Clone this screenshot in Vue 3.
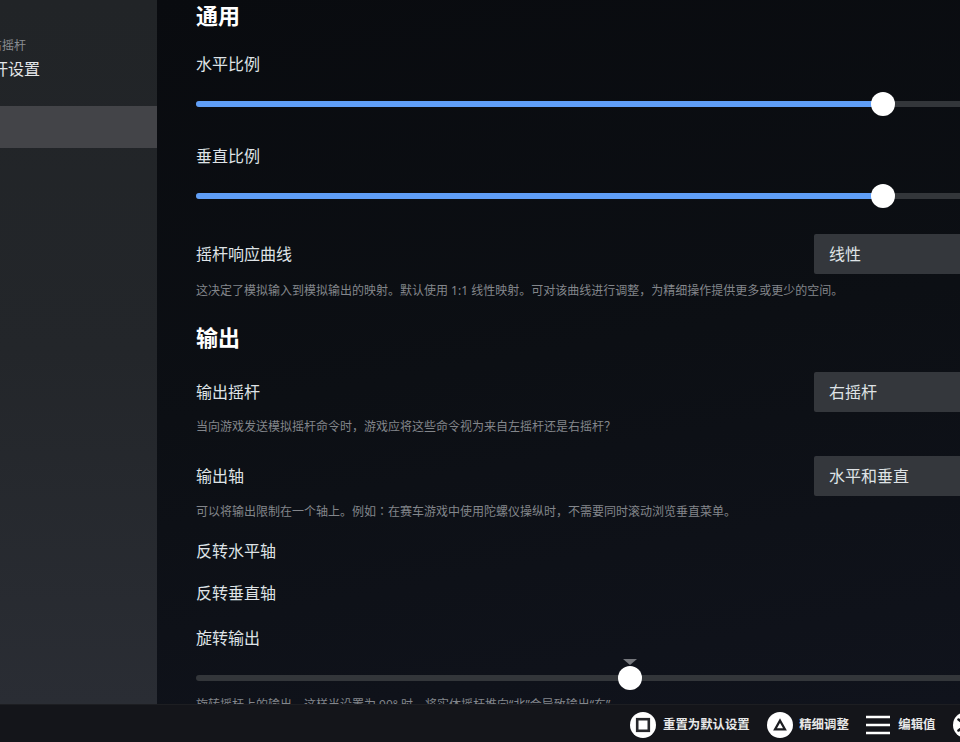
<template>
  <div class="page">
    <div class="top">
      <aside class="side">
        <div class="crumb">右摇杆</div>
        <div class="side-title">摇杆设置</div>
        <div class="side-active"></div>
      </aside>
      <main class="main">
        <h2 class="head first">通用</h2>
        <div class="label l-h">水平比例</div>
        <div class="slider s-h"><div class="fill" style="width: 687px"></div><div class="thumb" style="left: 675px"></div></div>
        <div class="label l-v">垂直比例</div>
        <div class="slider s-v"><div class="fill" style="width: 687px"></div><div class="thumb" style="left: 675px"></div></div>
        <div class="row r-curve"><div class="label">摇杆响应曲线</div><div class="select">线性</div></div>
        <p class="desc">这决定了模拟输入到模拟输出的映射。默认使用 1:1 线性映射。可对该曲线进行调整，为精细操作提供更多或更少的空间。</p>
        <h2 class="head second">输出</h2>
        <div class="row r-stick"><div class="label">输出摇杆</div><div class="select">右摇杆</div></div>
        <p class="desc">当向游戏发送模拟摇杆命令时，游戏应将这些命令视为来自左摇杆还是右摇杆？</p>
        <div class="row r-axis"><div class="label">输出轴</div><div class="select">水平和垂直</div></div>
        <p class="desc">可以将输出限制在一个轴上。例如<span class="colon">：</span>在赛车游戏中使用陀螺仪操纵时，不需要同时滚动浏览垂直菜单。</p>
        <div class="label l-inv1">反转水平轴</div>
        <div class="label l-inv2">反转垂直轴</div>
        <div class="label l-rot">旋转输出</div>
        <div class="slider s-rot"><div class="notch"></div><div class="thumb" style="left: 422px"></div></div>
        <p class="desc d-rot">旋转摇杆上的输出。这样当设置为 90° 时，将实体摇杆推向“北”会导致输出“东”。</p>
      </main>
    </div>
    <footer class="foot">
      <div class="hint">
        <span class="btn"><svg width="26" height="26" viewBox="0 0 26 26"><rect x="7.2" y="7.2" width="11.6" height="11.6" fill="none" stroke="#26272b" stroke-width="2.6"/></svg></span>
        <span class="hint-t">重置为默认设置</span>
      </div>
      <div class="hint h-fine">
        <span class="btn"><svg width="26" height="26" viewBox="0 0 26 26"><path d="M13 8.6 L18 17.4 H8 Z" fill="none" stroke="#1c1d21" stroke-width="2.2"/></svg></span>
        <span class="hint-t">精细调整</span>
      </div>
      <div class="hint h-menu">
        <svg class="menu" width="24" height="20" viewBox="0 0 24 20"><path d="M0 2h24M0 10h24M0 18h24" stroke="#fff" stroke-width="2.4"/></svg>
        <span class="hint-t">编辑值</span>
      </div>
      <div class="hint">
        <span class="btn"><svg width="26" height="26" viewBox="0 0 26 26"><path d="M5.5 7.5L20.5 18.5M20.5 7.5L5.5 18.5" stroke="#14151a" stroke-width="2.6" stroke-linecap="round"/></svg></span>
        <span class="hint-t">取消</span>
      </div>
    </footer>
  </div>
</template>

<script setup>
</script>

<style>
html, body { margin: 0; background: #14151a; }
</style>

<style scoped>
.page {
  width: 960px;
  height: 742px;
  overflow: hidden;
  display: flex;
  flex-direction: column;
  font-family: "Noto Sans", "Noto Sans CJK SC", sans-serif;
  color: #dfe3e6;
}
.top { flex: 1; min-height: 0; display: flex; overflow: hidden; }
.side {
  width: 157px;
  flex: none;
  overflow: hidden;
  background: linear-gradient(180deg, #212427 0%, #23262a 50%, #2a2d34 100%);
  padding-top: 37px;
  box-sizing: border-box;
}
.crumb { margin-left: -10px; font-size: 12px; line-height: 17px; color: #8b8e92; white-space: nowrap; }
.side-title { margin-left: -24px; margin-top: 3px; font-size: 16px; line-height: 24px; color: #e4e6e8; white-space: nowrap; }
.side-active { margin-top: 25px; height: 42px; background: #434448; }
.main {
  flex: none;
  width: 803px;
  padding-left: 39px;
  box-sizing: border-box;
  overflow: hidden;
  background: linear-gradient(170deg, #090b0f 0%, #0c0f14 50%, #10131c 100%);
}
.main > * { width: 900px; }
.head { margin: 0; font-size: 22px; line-height: 28px; font-weight: 700; color: #fff; }
.first { margin-top: 1px; }
.second { margin-top: 24px; }
.label { font-size: 16px; line-height: 24px; color: #dfe3e6; }
.l-h { margin-top: 23px; }
.slider { position: relative; height: 6px; background: #33363a; border-radius: 3px; }
.s-h { margin-top: 25px; }
.l-v { margin-top: 37px; }
.s-v { margin-top: 25px; }
.fill { height: 6px; background: #5f9ef7; border-radius: 3px; }
.thumb { position: absolute; top: -9px; width: 24px; height: 24px; border-radius: 50%; background: #fff; }
.notch {
  position: absolute; left: 427px; top: -16px; width: 0; height: 0;
  border-left: 7px solid transparent; border-right: 7px solid transparent; border-top: 6px solid #75777c;
}
.row { display: flex; align-items: center; justify-content: space-between; }
.select {
  width: 282px; height: 40px; box-sizing: border-box; padding-left: 15px;
  background: #34373c; border-radius: 2px; font-size: 16px; line-height: 40px; color: #dfe3e6;
}
.r-curve { margin-top: 35px; }
.desc { margin: 0; font-size: 12px; line-height: 16px; color: #83868b; white-space: nowrap; }
.colon { font-family: "Noto Sans CJK JP", sans-serif; }
.r-curve + .desc { margin-top: 9px; }
.r-stick { margin-top: 21px; }
.r-stick + .desc { margin-top: 7px; }
.r-axis { margin-top: 21px; }
.r-axis + .desc { margin-top: 7px; }
.l-inv1 { margin-top: 19px; }
.l-inv2 { margin-top: 18px; }
.l-rot { margin-top: 21px; }
.s-rot { margin-top: 25px; }
.d-rot { margin-top: 16px; }
.foot {
  flex: none;
  height: 38px;
  box-sizing: border-box;
  border-top: 1px solid #1d1e22;
  padding-top: 3px;
  background: #14151a;
  display: flex;
  align-items: center;
  padding-left: 630px;
  gap: 17.5px;
  white-space: nowrap;
}
.hint { display: flex; align-items: center; gap: 7px; flex: none; }
.h-fine { gap: 6px; }
.h-menu { gap: 8px; }
.btn { width: 26px; height: 26px; border-radius: 50%; background: #fff; display: block; flex: none; }
.btn svg { display: block; }
.hint-t { font-size: 12.4px; font-weight: 700; color: #e8e8e8; line-height: 18px; }
</style>
